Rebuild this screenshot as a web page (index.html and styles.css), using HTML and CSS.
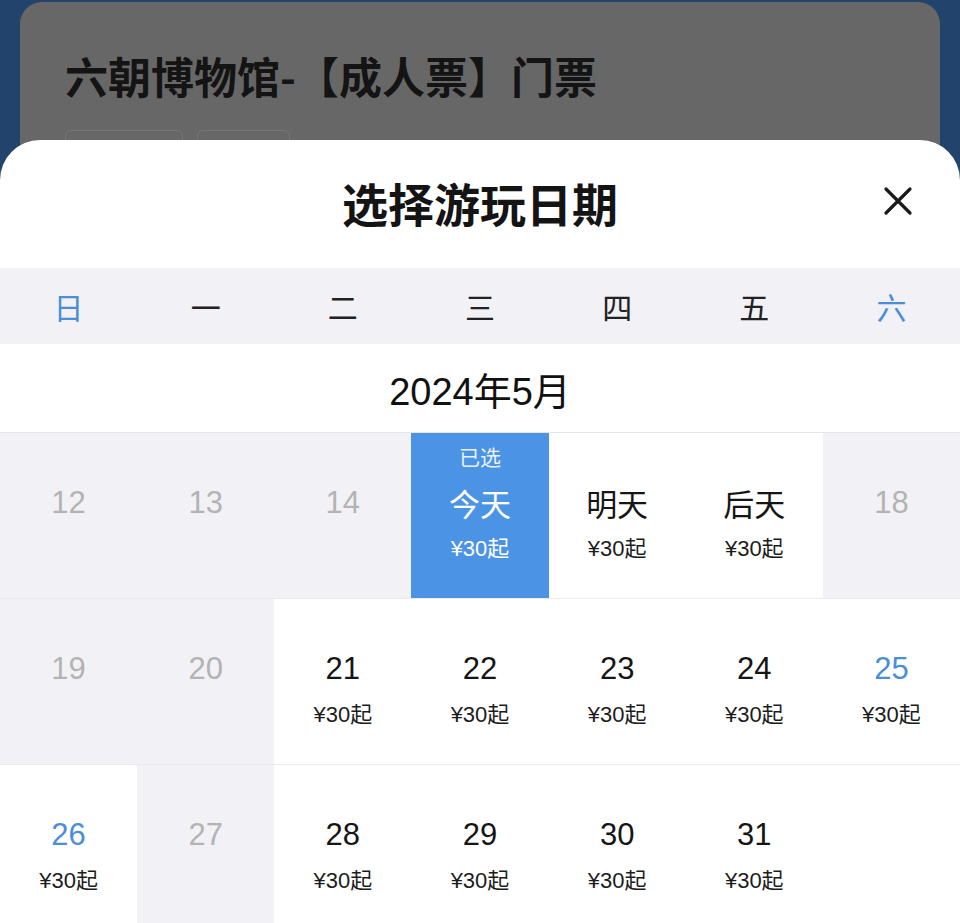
FILE: index.html
```html
<!DOCTYPE html>
<html lang="zh-CN">
<head>
<meta charset="utf-8">
<title>选择游玩日期</title>
<link rel="stylesheet" href="styles.css">
</head>
<body>
<div class="page">
  <div class="bg-card">
    <h1 class="bg-title">六朝博物馆-【成人票】门票</h1>
    <div class="bg-tags"><span class="bg-tag t1"></span><span class="bg-tag t2"></span></div>
  </div>
  <div class="sheet">
    <div class="sheet-head">
      <h2 class="sheet-title">选择游玩日期</h2>
      <button class="close" aria-label="关闭">
        <svg width="30" height="30" viewBox="0 0 30 30"><path d="M3 3 L27 27 M27 3 L3 27" stroke="#1a1a1a" stroke-width="3.2" stroke-linecap="round" fill="none"/></svg>
      </button>
    </div>
    <div class="weekdays">
      <span class="wk blue">日</span><span class="wk">一</span><span class="wk">二</span><span class="wk">三</span><span class="wk">四</span><span class="wk">五</span><span class="wk blue">六</span>
    </div>
    <div class="month">2024年5月</div>
    <div class="grid">
      <div class="cell off"><span class="num">12</span></div>
      <div class="cell off"><span class="num">13</span></div>
      <div class="cell off"><span class="num">14</span></div>
      <div class="cell sel"><span class="lab">已选</span><span class="num word">今天</span><span class="price">¥30起</span></div>
      <div class="cell"><span class="num word">明天</span><span class="price">¥30起</span></div>
      <div class="cell"><span class="num word">后天</span><span class="price">¥30起</span></div>
      <div class="cell off"><span class="num">18</span></div>

      <div class="cell off"><span class="num">19</span></div>
      <div class="cell off"><span class="num">20</span></div>
      <div class="cell"><span class="num">21</span><span class="price">¥30起</span></div>
      <div class="cell"><span class="num">22</span><span class="price">¥30起</span></div>
      <div class="cell"><span class="num">23</span><span class="price">¥30起</span></div>
      <div class="cell"><span class="num">24</span><span class="price">¥30起</span></div>
      <div class="cell"><span class="num blue">25</span><span class="price">¥30起</span></div>

      <div class="cell"><span class="num blue">26</span><span class="price">¥30起</span></div>
      <div class="cell off"><span class="num">27</span></div>
      <div class="cell"><span class="num">28</span><span class="price">¥30起</span></div>
      <div class="cell"><span class="num">29</span><span class="price">¥30起</span></div>
      <div class="cell"><span class="num">30</span><span class="price">¥30起</span></div>
      <div class="cell"><span class="num">31</span><span class="price">¥30起</span></div>
      <div class="cell"></div>
    </div>
  </div>
</div>
</body>
</html>
```

FILE: styles.css
```css
* { box-sizing: border-box; }
html, body { margin: 0; padding: 0; }
body {
  width: 960px;
  height: 923px;
  overflow: hidden;
  background: #22446c;
  font-family: "Liberation Sans", "Noto Sans CJK SC", sans-serif;
  color: #1a1a1a;
}
.page {
  width: 960px;
  height: 923px;
  overflow: hidden;
  padding-top: 2px;
}
.bg-card {
  margin: 0 20px;
  height: 190px;
  background: #676767;
  border-radius: 22px 22px 0 0;
  padding: 46px 0 0 45px;
  overflow: hidden;
}
.bg-title {
  margin: 0;
  font-family: "Noto Sans CJK SC", sans-serif;
  font-size: 43px;
  line-height: 54px;
  font-weight: 700;
  color: #141414;
}
.bg-tags {
  display: flex;
  gap: 14px;
  margin-top: 28px;
}
.bg-tag {
  height: 34px;
  border: 1px solid #777;
  border-radius: 6px;
}
.bg-tag.t1 { width: 118px; }
.bg-tag.t2 { width: 93px; }

.sheet {
  position: relative;
  margin-top: -52px;
  background: #fff;
  border-radius: 40px 40px 0 0;
  height: 800px;
}
.sheet-head {
  height: 128px;
  display: flex;
  align-items: center;
  justify-content: center;
  position: relative;
}
.sheet-title {
  margin: 0;
  font-family: "Noto Sans CJK SC", sans-serif;
  font-size: 46px;
  font-weight: 700;
  line-height: 56px;
  color: #141414;
  margin-bottom: 4px;
}
.close {
  position: absolute;
  right: 47px;
  top: 46px;
  width: 30px;
  height: 30px;
  padding: 0;
  border: 0;
  background: none;
  display: block;
}
.close svg { display: block; }

.weekdays {
  height: 76px;
  background: #f1f1f6;
  display: grid;
  grid-template-columns: repeat(7, 1fr);
  align-items: center;
}
.wk {
  text-align: center;
  font-family: "Noto Sans CJK SC", sans-serif;
  font-size: 30px;
  line-height: 36px;
  color: #222;
}
.blue { color: #4a8ed8 !important; }

.month {
  height: 89px;
  border-bottom: 1px solid #e6e6ea;
  display: flex;
  align-items: center;
  justify-content: center;
  font-size: 38px;
  color: #111;
}

.grid {
  display: grid;
  grid-template-columns: repeat(7, 1fr);
  grid-auto-rows: 166px;
}
.cell {
  border-bottom: 1px solid #ececef;
  display: flex;
  flex-direction: column;
  align-items: center;
  padding-top: 52px;
  background: #fff;
}
.cell.off { background: #f2f2f6; border-bottom-color: #e9e9ee; }
.cell.off .num { color: #b3b3b3; }
.cell.sel {
  background: #4b93e4;
  padding-top: 11px;
  color: #fff;
}
.lab {
  font-family: "Noto Sans CJK SC", sans-serif;
  font-size: 21px;
  line-height: 24px;
  margin-bottom: 17px;
  color: #eaf2fd;
}
.num {
  font-size: 31px;
  line-height: 36px;
  color: #151515;
}
.num.word {
  font-family: "Noto Sans CJK SC", sans-serif;
  font-size: 31px;
}
.cell.sel .num { color: #fff; }
.price {
  margin-top: 16px;
  font-size: 22px;
  line-height: 24px;
  color: #1c1c1c;
}
.cell.sel .price { color: #fff; }
```
